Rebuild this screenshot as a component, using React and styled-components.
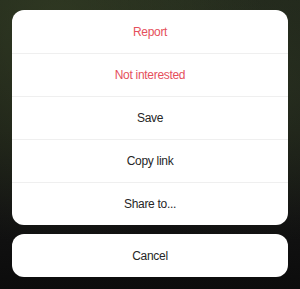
import React from "react";
import styled, { createGlobalStyle } from "styled-components";

const GlobalStyle = createGlobalStyle`
  html, body {
    margin: 0;
    padding: 0;
  }
  body {
    font-family: "Liberation Sans", Arial, sans-serif;
    -webkit-font-smoothing: antialiased;
  }
`;

const items = [
  { label: "Report", danger: true },
  { label: "Not interested", danger: true },
  { label: "Save" },
  { label: "Copy link" },
  { label: "Share to..." },
];

export default function App() {
  return (
    <>
      <GlobalStyle />
      <Backdrop>
        <Sheet>
          {items.map((item) => (
            <Option key={item.label} $danger={item.danger}>
              {item.label}
            </Option>
          ))}
        </Sheet>
        <Sheet>
          <Option>Cancel</Option>
        </Sheet>
      </Backdrop>
    </>
  );
}

const Backdrop = styled.div`
  width: 300px;
  height: 289px;
  box-sizing: border-box;
  padding: 10px 12px 12px;
  display: flex;
  flex-direction: column;
  gap: 9px;
  background:
    radial-gradient(ellipse at 20% 10%, rgba(60, 72, 40, 0.55), transparent 60%),
    radial-gradient(ellipse at 85% 30%, rgba(50, 60, 38, 0.5), transparent 55%),
    linear-gradient(180deg, #20261b 0%, #1a1d16 45%, #121212 75%, #0c0c0c 100%);
`;

const Sheet = styled.div`
  background: #fff;
  border-radius: 12px;
  overflow: hidden;
  display: flex;
  flex-direction: column;
`;

const Option = styled.button`
  height: 43px;
  border: none;
  border-top: 1px solid #efefef;
  background: transparent;
  padding: 0;
  font-family: "Liberation Sans", Arial, sans-serif;
  font-size: 12px;
  letter-spacing: -0.3px;
  color: ${(p) => (p.$danger ? "#e5505c" : "#262626")};
  text-align: center;

  &:first-child {
    border-top: none;
  }
`;
